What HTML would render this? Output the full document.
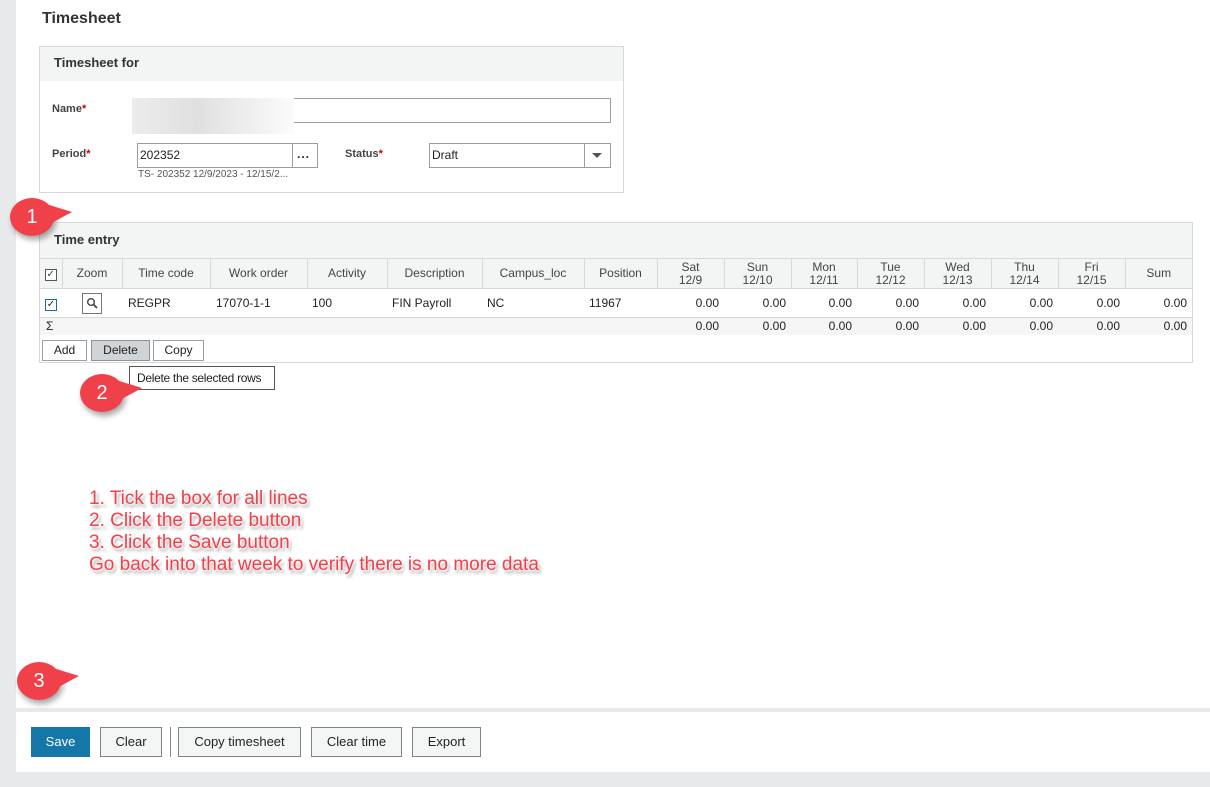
<!DOCTYPE html>
<html><head><meta charset="utf-8"><style>
*{box-sizing:border-box;margin:0;padding:0}
body{width:1210px;height:787px;position:relative;background:#e8e9eb;font-family:"Liberation Sans",Arial,sans-serif;font-size:12px;color:#222;overflow:hidden}
.a{position:absolute}
.main{left:16px;top:0;width:1194px;height:708px;background:#fff}
.foot{left:16px;top:712px;width:1194px;height:60px;background:#fff}
.panel{border:1px solid #d6d8da;background:#fff}
.ph{background:#f3f4f4;font-weight:bold;font-size:13px;padding-left:14px;color:#333}
.lbl{font-weight:bold;font-size:11px;color:#444}
.lbl i{color:#c00;font-style:normal}
.inp{border:1px solid #9a9ea3;background:#fff;font-size:12px;padding:4px 2px}
table{border-collapse:collapse;position:absolute;left:40px;top:258px;width:1152px;table-layout:fixed}
td,th{font-weight:normal;font-size:12px;overflow:hidden;white-space:nowrap}
th{background:#f3f4f4;border-right:1px solid #d6d8da;border-bottom:1px solid #d6d8da;border-top:1px solid #d6d8da;color:#444;height:30px;text-align:center;line-height:13px}
tr.d td{height:29px;border-bottom:1px solid #d6d8da;padding-top:0}
tr.s td{height:17px;background:#f5f5f5}
.r{text-align:right;padding-right:5px}
.cb{display:inline-block;width:12px;height:12px;border:1px solid #555;font-size:10px;line-height:10px;text-align:center;background:#fff}
.btn{border:1px solid #9ba0a6;background:#fff;font-size:12px;text-align:center}
.fb{border:1px solid #7d858c;background:#f4f5f5;font-size:13px;text-align:center;line-height:28px;height:30px;color:#222}
.bubble{width:44px;height:38px;background:#f0404a;border-radius:50%;color:#fff;font-size:20px;text-align:center;line-height:38px;box-shadow:2px 4px 6px rgba(0,0,0,.35)}
.bubble:after{content:"";position:absolute;right:-18px;top:6px;border-left:26px solid #f0404a;border-top:8px solid transparent;border-bottom:14px solid transparent}
.note{left:89px;top:488px;color:#f2404a;font-size:19px;line-height:22px;text-shadow:0 0 2px #fff,1px 1px 2px #fff,2px 3px 3px rgba(0,0,0,.45)}
</style></head><body>
<div class="a main"></div>
<div class="a foot"></div>
<div class="a" style="left:42px;top:10px;font-size:16px;font-weight:bold;color:#333">Timesheet</div>

<div class="a panel" style="left:39px;top:46px;width:585px;height:147px"></div>
<div class="a ph" style="left:40px;top:47px;width:583px;height:34px;line-height:32px">Timesheet for</div>
<div class="a lbl" style="left:52px;top:103px">Name<i>*</i></div>
<div class="a inp" style="left:137px;top:98px;width:474px;height:25px"></div>
<div class="a" style="left:132px;top:98px;width:162px;height:36px;background:linear-gradient(90deg,#ececec,#e0e0e0 40%,#f2f2f2 80%,#fcfcfc)"></div>
<div class="a lbl" style="left:52px;top:148px">Period<i>*</i></div>
<div class="a inp" style="left:137px;top:143px;width:181px;height:25px">202352</div>
<div class="a" style="left:292px;top:143px;width:1px;height:25px;background:#9a9ea3"></div>
<div class="a" style="left:297px;top:147px;font-weight:bold;letter-spacing:1px">...</div>
<div class="a" style="left:138px;top:169px;font-size:10px;color:#555">TS- 202352 12/9/2023 - 12/15/2...</div>
<div class="a lbl" style="left:345px;top:148px">Status<i>*</i></div>
<div class="a inp" style="left:429px;top:143px;width:182px;height:25px">Draft</div>
<div class="a" style="left:584px;top:143px;width:1px;height:25px;background:#9a9ea3"></div>
<div class="a" style="left:592px;top:153px;border-left:5px solid transparent;border-right:5px solid transparent;border-top:5px solid #555"></div>

<div class="a panel" style="left:39px;top:222px;width:1154px;height:141px"></div>
<div class="a ph" style="left:40px;top:223px;width:1152px;height:35px;line-height:34px">Time entry</div>
<table>
<colgroup><col style="width:22px"><col style="width:60px"><col style="width:88px"><col style="width:97px"><col style="width:80px"><col style="width:95px"><col style="width:102px"><col style="width:73px"><col style="width:67px"><col style="width:67px"><col style="width:66px"><col style="width:67px"><col style="width:67px"><col style="width:67px"><col style="width:67px"><col style="width:67px"></colgroup>
<tr><th><span class="cb">✓</span></th><th>Zoom</th><th>Time code</th><th>Work order</th><th>Activity</th><th>Description</th><th>Campus_loc</th><th>Position</th><th>Sat<br>12/9</th><th>Sun<br>12/10</th><th>Mon<br>12/11</th><th>Tue<br>12/12</th><th>Wed<br>12/13</th><th>Thu<br>12/14</th><th>Fri<br>12/15</th><th style="border-right:none">Sum</th></tr>
<tr class="d"><td style="text-align:center"><span class="cb" style="border-color:#1b6d99">✓</span></td><td style="text-align:center"><span style="display:inline-block;width:20px;height:21px;border:1px solid #777;vertical-align:middle;position:relative"><svg width="12" height="12" style="position:absolute;left:3px;top:3px"><circle cx="5" cy="5" r="3.3" fill="none" stroke="#444" stroke-width="1.4"/><path d="M7.5 7.5L11 11" stroke="#444" stroke-width="1.8"/></svg></span></td><td style="padding-left:6px">REGPR</td><td style="padding-left:6px">17070-1-1</td><td style="padding-left:5px">100</td><td style="padding-left:5px">FIN Payroll</td><td style="padding-left:5px">NC</td><td style="padding-left:5px">11967</td><td class="r">0.00</td><td class="r">0.00</td><td class="r">0.00</td><td class="r">0.00</td><td class="r">0.00</td><td class="r">0.00</td><td class="r">0.00</td><td class="r">0.00</td></tr>
<tr class="s"><td style="padding-left:6px">Σ</td><td></td><td></td><td></td><td></td><td></td><td></td><td></td><td class="r">0.00</td><td class="r">0.00</td><td class="r">0.00</td><td class="r">0.00</td><td class="r">0.00</td><td class="r">0.00</td><td class="r">0.00</td><td class="r">0.00</td></tr>
</table>
<div class="a btn" style="left:42px;top:340px;width:45px;height:21px;line-height:19px">Add</div>
<div class="a btn" style="left:91px;top:340px;width:59px;height:21px;line-height:19px;background:#d1d4d7;border-color:#8c9298">Delete</div>
<div class="a btn" style="left:153px;top:340px;width:51px;height:21px;line-height:19px">Copy</div>
<div class="a" style="left:129px;top:366px;width:146px;height:24px;border:1px solid #555;background:#fff;font-size:12px;line-height:22px;padding-left:7px;letter-spacing:-0.3px">Delete the selected rows</div>

<div class="a bubble" style="left:10px;top:198px">1</div>
<div class="a bubble" style="left:80px;top:374px">2</div>
<div class="a bubble" style="left:17px;top:662px">3</div>

<div class="a note">1. Tick the box for all lines<br>2. Click the Delete button<br>3. Click the Save button<br>Go back into that week to verify there is no more data</div>

<div class="a" style="left:31px;top:727px;width:59px;height:30px;background:#1477a8;color:#fff;font-size:13px;text-align:center;line-height:30px">Save</div>
<div class="a fb" style="left:100px;top:727px;width:62px">Clear</div>
<div class="a" style="left:170px;top:727px;width:1px;height:30px;background:#888"></div>
<div class="a fb" style="left:178px;top:727px;width:123px">Copy timesheet</div>
<div class="a fb" style="left:311px;top:727px;width:91px">Clear time</div>
<div class="a fb" style="left:412px;top:727px;width:69px">Export</div>
</body></html>
